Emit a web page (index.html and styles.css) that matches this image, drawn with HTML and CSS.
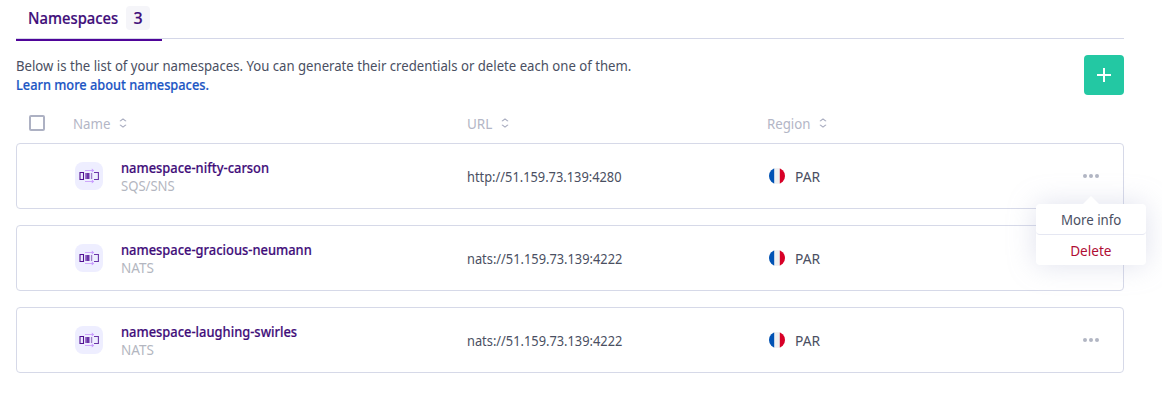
FILE: index.html
```
<!DOCTYPE html>
<html lang="en">
<head>
<meta charset="utf-8">
<title>Namespaces</title>
<link rel="stylesheet" href="styles.css">
</head>
<body>
<svg class="defs" width="0" height="0">
  <symbol id="sort" viewBox="0 0 8 12"><path d="M1.3 4.3V4L4 1.9 6.7 4v.3M1.3 7.7V8L4 10.1 6.7 8v-.3" fill="none" stroke="#aaaec1" stroke-width="1.2"/></symbol>
  <symbol id="dots" viewBox="0 0 16 4"><g fill="#b2b6c3"><circle cx="2" cy="2" r="2"/><circle cx="8" cy="2" r="2"/><circle cx="14" cy="2" r="2"/></g></symbol>
  <symbol id="flag" viewBox="0 0 16 16"><clipPath id="round"><circle cx="8" cy="8" r="8"/></clipPath><g clip-path="url(#round)"><path fill="#f0f0f0" d="M0 0h16v16H0z"/><path fill="#0052b4" d="M0 0h5.2v16H0z"/><path fill="#d80027" d="M10.8 0H16v16h-5.2z"/></g></symbol>
  <symbol id="queue" viewBox="0 0 28 28">
    <rect width="28" height="28" rx="8" fill="#eeeeff"/>
    <path d="M5 10.5h3.5v7H5z" fill="none" stroke="#521094" stroke-width="1.1"/>
    <path d="M19 10.5h4.4v7H19" fill="none" stroke="#6b35a8" stroke-width="1.1"/>
    <path d="M10 11h1v6h-1zM14.2 11h.9v6h-.9z" fill="#9b75c8"/>
    <path d="M11.2 11h2.8v6h-2.8z" fill="#6a32a8"/>
    <path d="M16.2 11h1v6h-1z" fill="#8a62bd"/>
    <path d="M10 8.5h8M10 19.5h8" stroke="#cda7fa"/>
    <path d="M16.8 6.6l2.4 1.9-2.4 1.9zM16.8 17.6l2.4 1.9-2.4 1.9z" fill="#c799ff"/>
  </symbol>
</svg>
<main class="page">
  <nav class="tabs">
    <a class="tab"><span class="t tab-label">Namespaces</span><span class="count">3</span></a>
  </nav>
  <section class="intro">
    <div class="intro-text">
      <p><span class="t description">Below is the list of your namespaces. You can generate their credentials or delete each one of them.</span></p>
      <p><a class="t learn">Learn more about namespaces.</a></p>
    </div>
    <button class="add" aria-label="Add"><svg width="14" height="14"><path d="M7 0v14M0 7h14" stroke="#fff" stroke-width="2"/></svg></button>
  </section>
  <div class="grid head">
    <span class="checkbox"></span>
    <div class="sortable head-name"><span class="t">Name</span><svg class="sort"><use href="#sort"/></svg></div>
    <div class="sortable head-url"><span class="t">URL</span><svg class="sort"><use href="#sort"/></svg></div>
    <div class="sortable head-region"><span class="t">Region</span><svg class="sort"><use href="#sort"/></svg></div>
  </div>
  <div class="rows">
    <article class="grid row">
      <svg class="queue"><use href="#queue"/></svg>
      <div class="name"><a class="t">namespace-nifty-carson</a><span class="t sqs">SQS/SNS</span></div>
      <span class="t url">http://51.159.73.139:4280</span>
      <div class="region"><svg class="flag"><use href="#flag"/></svg><span class="t">PAR</span></div>
      <div class="actions"><svg class="dots"><use href="#dots"/></svg>
        <div class="menu">
          <a class="item"><span class="t more">More info</span></a>
          <a class="item danger"><span class="t delete">Delete</span></a>
        </div>
      </div>
    </article>
    <article class="grid row">
      <svg class="queue"><use href="#queue"/></svg>
      <div class="name"><a class="t">namespace-gracious-neumann</a><span class="t nats">NATS</span></div>
      <span class="t url">nats://51.159.73.139:4222</span>
      <div class="region"><svg class="flag"><use href="#flag"/></svg><span class="t">PAR</span></div>
      <div class="actions"></div>
    </article>
    <article class="grid row">
      <svg class="queue"><use href="#queue"/></svg>
      <div class="name"><a class="t">namespace-laughing-swirles</a><span class="t nats">NATS</span></div>
      <span class="t url">nats://51.159.73.139:4222</span>
      <div class="region"><svg class="flag"><use href="#flag"/></svg><span class="t">PAR</span></div>
      <div class="actions"><svg class="dots"><use href="#dots"/></svg></div>
    </article>
  </div>
</main>
</body>
</html>
```
FILE: styles.css
```
* { box-sizing: border-box; }
body { margin: 0; background: #fff; color: #4a4f62; font: 15px/20px "Noto Sans", sans-serif; overflow: hidden; }
p { margin: 0; }
svg { display: block; flex: none; }
.defs { position: absolute; }
.page { padding: 0 38px 0 16px; }

/* condensed text */
.t { display: inline-block; white-space: nowrap; transform: scaleX(var(--w, .87)); transform-origin: left center; }

.tabs { display: flex; height: 39px; border-bottom: 1px solid #d4d7e8; }
.tab { display: flex; align-items: center; width: 146px; height: 41px; padding: 0 12px 3px; border-bottom: 2px solid #4f0599; color: #3f0d7a; font-size: 16px; font-weight: 500; flex: none; -webkit-text-stroke: .2px; }
.tab-label { --w: .925; width: 98px; }
.count { width: 24px; height: 24px; line-height: 24px; border-radius: 4px; background: #f5f5f9; text-align: center; }

.intro { display: flex; justify-content: space-between; height: 56px; padding-top: 16px; }
.intro-text { padding-top: 1px; line-height: 19px; }
.intro-text p { height: 19px; }
.description { --w: .877; }
.learn { --w: .853; color: #1b55c4; font-weight: 500; -webkit-text-stroke: .2px; }
.add { display: flex; align-items: center; justify-content: center; width: 40px; height: 40px; padding: 0; border: 0; border-radius: 4px; background: #23c8a3; }

.grid { display: grid; align-items: center; }
.head { grid-template-columns: 44px 394px 300px 1fr; height: 48px; padding: 8px 0 0 13px; color: #b3b6c6; }
.checkbox { width: 16px; height: 16px; border: 2px solid #adb1c3; border-radius: 2px; }
.sortable { display: flex; align-items: center; }
.sort { width: 8px; height: 12px; }
.head-name { --w: .885; }
.head-name .t { width: 46px; }
.head-url { --w: .9; }
.head-url .t { width: 34px; }
.head-region { --w: .883; }
.head-region .t { width: 52px; }

.rows { display: grid; gap: 16px; }
.row { grid-template-columns: 46px 346px 300px 1fr 16px; height: 66px; padding: 0 24px 0 58px; border: 1px solid #d6d9e8; border-radius: 4px; }
.queue { width: 28px; height: 28px; }
.name { --w: .86; display: flex; flex-direction: column; align-items: flex-start; line-height: 18px; color: #3f0d7a; font-weight: 500; }
.name a { -webkit-text-stroke: .2px; }
.name span { color: #b3b6c0; font-weight: 400; }
.name .sqs { --w: .872; }
.name .nats { --w: .9; }
.url { --w: .855; }
.region { --w: .92; display: flex; align-items: center; gap: 10px; padding-left: 2px; }
.flag { width: 16px; height: 16px; }
.actions { position: relative; width: 16px; }
.dots { width: 16px; height: 4px; }

.menu { position: absolute; z-index: 2; top: 30px; left: 50%; width: 110px; margin-left: -55px; border-radius: 4px; background: #fff; box-shadow: 0 0 28px rgba(165, 172, 205, .36); }
.menu::before { content: ""; position: absolute; top: -8px; left: 47px; border: 8px solid transparent; border-top: 0; border-bottom-color: #fff; }
.item { display: flex; align-items: center; justify-content: center; height: 31px; border-bottom: 1px solid #e5e7f2; border-radius: 4px; }
.item .t { transform-origin: center; }
.danger { height: 30px; border: 0; color: #b00d34; }
.more { --w: .885; }
.delete { --w: .905; }
```
